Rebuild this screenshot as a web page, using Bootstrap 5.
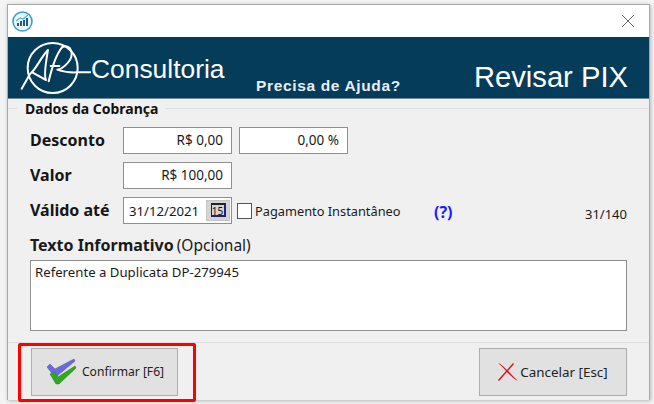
<!DOCTYPE html>
<html lang="pt-BR">
<head>
<meta charset="UTF-8">
<title>Revisar PIX</title>
<link href="https://cdn.jsdelivr.net/npm/bootstrap@5.3.2/dist/css/bootstrap.min.css" rel="stylesheet">
<style>
html, body { height: 100%; overflow: hidden; }
body { background: #f4f4f4; font-family: "Noto Sans", "Liberation Sans", sans-serif; font-size: 12px; color: #1a1a1a; padding: 4px 4px 0 7px; }
.app-window { width: 643px; height: 396px; background: #f0f0f0; border: 1px solid #a9a9a9; border-bottom: 0; box-shadow: 1px 1px 4px rgba(0,0,0,.25); }
.title-strip { height: 32px; flex: none; background: #fff; padding: 0 14px 0 4px; }
.banner { height: 62px; flex: none; background: #053c5a; color: #fff; border-bottom: 1px solid #6f8b9b; }
.logo-area { width: 83px; padding: 1px 0 0 12px; flex: none; }
.brand-name { font-family: "Liberation Sans", sans-serif; font-size: 26.4px; line-height: 1; margin-top: 19px; width: 165px; flex: none; }
.help-text { font-family: "Liberation Sans", sans-serif; font-weight: 700; font-size: 15.5px; color: #e8eef2; margin-top: 37px; letter-spacing: .65px; }
.page-title { font-family: "Liberation Sans", sans-serif; font-size: 29.2px; line-height: 1; margin: 26px 21px 0 0; }
.group-head { height: 19px; flex: none; }
.group-rule { height: 1px; background: #dcdcdc; margin-top: 9px; }
.rule-left { width: 9px; }
.group-title { font-weight: 700; font-size: 14px; line-height: 19px; padding: 0 8px; color: #111; }
.form-area { padding: 5px 22px 0 22px; height: 224px; flex: none; }
.field-row { height: 35px; }
.field-label { width: 93px; font-weight: 700; font-size: 16px; color: #151515; margin-bottom: 2px; }
.val-box { width: 109px; height: 27px; background: #fff; border: 1px solid #8f8f8f; padding: 0 8px; line-height: 24px; text-align: right; font-size: 13.5px; }
.val-box-pct { margin-left: 7px; }
.date-box { display: flex; align-items: center; justify-content: space-between; padding: 0 1px 0 5px; text-align: left; font-size: 13.2px; }
.cal-btn { width: 24px; height: 21px; background: #d4d4d4; border: 1px solid #c4c4c4; padding-top: 3px; color: #111; }
.cal-btn span { display: block; width: 15px; height: 14px; margin: 0 auto; font-size: 10px; line-height: 12px; text-align: center; border: 1px solid #222; border-top-width: 2px; border-right: 2px solid #20207a; border-bottom: 2px solid #20207a; margin-top: -1px; }
.check-box { width: 15px; height: 16px; background: #fff; border: 1px solid #555; margin: 1px 3px 0 5px; }
.check-text { font-size: 12.8px; width: 179px; margin-top: 3px; }
.help-link { font-weight: 700; font-size: 16px; color: #1a1aff; margin-top: 3px; }
.count-text { font-size: 13px; margin-top: 8px; }
.text-label { margin-top: 7px; line-height: 20px; }
.text-label b { font-size: 16px; }
.text-label span { font-size: 15.5px; margin-left: 3px; }
.memo-box { height: 71px; background: #fff; border: 1px solid #8f8f8f; margin-top: 3px; padding: 2px 4px; font-size: 13.2px; }
.foot-bar { border-top: 1px solid #dedede; height: 58px; flex: none; padding: 0 22px 0 10px; }
.mark-red { border: 3px solid #f00; border-radius: 2px; padding: 2px 15px 3px 10px; height: 59px; }
.foot-btn { width: 148px; height: 48px; background: #e1e1e1; border: 1px solid #adadad; font-size: 12.1px; color: #222; }
.confirm-btn { width: 147px; gap: 5px; padding-left: 2px; }
.cancel-btn { margin-top: 5px; gap: 2px; }
.cancel-btn span { font-size: 13.4px; }
.foot-btn svg { flex: none; }
</style>
</head>
<body>
<div class="app-window d-flex flex-column">
  <div class="title-strip d-flex align-items-center justify-content-between">
    <svg width="21" height="21" viewBox="0 0 21 21">
      <circle cx="10.5" cy="10.5" r="9.5" fill="#eaf6fb" stroke="#3f9fc4" stroke-width="1.6"/>
      <path d="M5 15V12h2v3zM8 15v-5h2v5zM11 15V9h2v6zM14 15V7h2v8z" fill="#1c5f86"/>
      <path d="M4 10l4-3 3 1 5-4" fill="none" stroke="#55b5d8" stroke-width="1.2"/>
    </svg>
    <svg width="14" height="14" viewBox="0 0 14 14"><path d="M1 1l12 12M13 1L1 13" stroke="#666" stroke-width="1" fill="none"/></svg>
  </div>

  <div class="banner d-flex">
    <div class="logo-area">
      <svg class="d-block" width="71" height="60" viewBox="0 0 213 180" fill="none" stroke="#fff" stroke-width="6" stroke-linecap="round" stroke-linejoin="round">
        <circle cx="98" cy="90" r="75"/>
        <path d="M5 152L30 108C50 92 62 58 84 36C78 72 70 110 78 126L38 104"/>
        <path d="M86 130C94 96 106 52 126 28"/>
        <path d="M92 84H118"/>
        <path d="M126 28C152 14 170 52 136 82C128 90 120 94 112 95C136 104 152 104 172 103H213"/>
      </svg>
    </div>
    <div class="brand-name">Consultoria</div>
    <div class="help-text flex-grow-1">Precisa de Ajuda?</div>
    <div class="page-title">Revisar PIX</div>
  </div>

  <div class="group-head d-flex">
    <div class="group-rule rule-left"></div>
    <div class="group-title">Dados da Cobrança</div>
    <div class="group-rule flex-grow-1"></div>
  </div>

  <div class="form-area">
    <div class="field-row d-flex align-items-center">
      <div class="field-label">Desconto</div>
      <div class="val-box">R$ 0,00</div>
      <div class="val-box val-box-pct">0,00 %</div>
    </div>
    <div class="field-row d-flex align-items-center">
      <div class="field-label">Valor</div>
      <div class="val-box">R$ 100,00</div>
    </div>
    <div class="field-row d-flex align-items-center">
      <div class="field-label">Válido até</div>
      <div class="val-box date-box">31/12/2021<div class="cal-btn"><span>15</span></div></div>
      <div class="check-box"></div>
      <div class="check-text">Pagamento Instantâneo</div>
      <div class="help-link flex-grow-1">(?)</div>
      <div class="count-text">31/140</div>
    </div>
    <div class="text-label"><b>Texto Informativo</b><span>(Opcional)</span></div>
    <div class="memo-box">Referente a Duplicata DP-279945</div>
  </div>

  <div class="foot-bar d-flex align-items-start justify-content-between">
    <div class="mark-red">
      <div class="foot-btn confirm-btn d-flex align-items-center justify-content-center">
        <svg width="30" height="26" viewBox="0 0 30 26">
          <path d="M0 8L3 5L8 10L27 0L28 2L10 17L7 17Z" fill="#6a6ae0" stroke="#4a4ca8" stroke-width=".5"/>
          <path d="M3 15L7 13L11 18L28 7L29 9L12 25L9 25Z" fill="#2fa81f" stroke="#1f7a17" stroke-width=".5"/>
        </svg>
        <span>Confirmar [F6]</span>
      </div>
    </div>
    <div class="foot-btn cancel-btn d-flex align-items-center justify-content-center">
      <svg width="20" height="20" viewBox="0 0 20 20"><path d="M0 1c3 1 6 4 9 7l6-7 1 1-6 7c3 3 6 6 10 10-4-2-8-6-11-9-3 3-5 6-8 9l-1-1 8-9C6 6 3 4 0 1z" fill="#d8101c"/></svg>
      <span>Cancelar [Esc]</span>
    </div>
  </div>
</div>
<script src="https://cdn.jsdelivr.net/npm/bootstrap@5.3.2/dist/js/bootstrap.bundle.min.js"></script>
</body>
</html>
